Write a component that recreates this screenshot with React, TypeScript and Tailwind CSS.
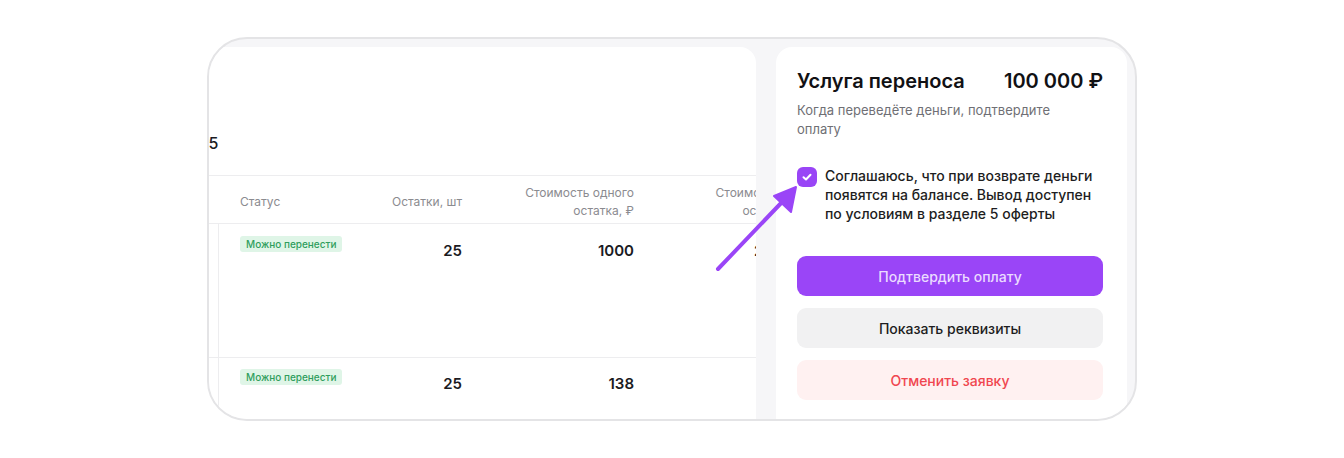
import React from "react";

function Badge() {
  return (
    <div className="w-fit rounded-[3px] bg-[#dff5e7] px-[6px] py-[2px] text-[10px] font-medium leading-[12px] text-[#2f9e5d]">
      Можно перенести
    </div>
  );
}

function Row({ qty, price, total, first }: { qty: string; price: string; total: string; first: boolean }) {
  const num = `shrink-0 text-right text-[15px] font-semibold leading-[22px] text-[#1b1b1f] ${first ? "pt-[16px]" : "pt-[15px]"}`;
  return (
    <div className="flex h-[134px] shrink-0 border-b border-[#ededef]">
      <div className="w-[10px] shrink-0 border-r border-[#ededef]" />
      <div className={`w-[150px] shrink-0 pl-[21px] ${first ? "pt-[12px]" : "pt-[11px]"}`}>
        <Badge />
      </div>
      <div className={`w-[93px] ${num}`}>{qty}</div>
      <div className={`w-[172px] ${num}`}>{price}</div>
      <div className={`w-[187px] whitespace-nowrap ${num}`}>{total}</div>
    </div>
  );
}

export default function App() {
  return (
    <div className="relative h-[458px] w-[1344px] bg-white" style={{ fontFamily: "Inter, 'Noto Sans', sans-serif" }}>
      <div className="flex justify-center pt-[37px]">
        <div className="flex h-[384px] w-[930px] gap-[20px] overflow-hidden rounded-[40px] border-2 border-[#e4e4e6] bg-[#f6f6f8] pr-[8px] pt-[8px]">
          {/* Left card */}
          <div className="flex w-[547px] shrink-0 flex-col overflow-hidden rounded-tr-[16px] bg-white">
            <div className="h-[129px] shrink-0 border-b border-[#ededef] pt-[84px]">
              <div className="ml-[-11px] text-[16px] font-medium leading-[24px] text-[#1b1b1f]">45</div>
            </div>
            <div className="flex h-[48px] shrink-0 items-center border-b border-[#ededef] pt-[4px] text-[12px] leading-[18px] text-[#8b8b90]">
              <div className="w-[10px] shrink-0" />
              <div className="w-[150px] shrink-0 pl-[21px]">Статус</div>
              <div className="w-[93px] shrink-0 text-right">Остатки, шт</div>
              <div className="w-[172px] shrink-0 text-right">
                Стоимость одного
                <br />
                остатка, ₽
              </div>
              <div className="w-[176px] shrink-0 whitespace-nowrap text-right">
                Стоимость всех
                <br />
                остатков, ₽
              </div>
            </div>
            <Row qty="25" price="1000" total="25 000 ₽" first={true} />
            <Row qty="25" price="138" total="3 450" first={false} />
          </div>

          {/* Right card */}
          <div className="flex w-[351px] shrink-0 flex-col rounded-t-[16px] bg-white pl-[21px] pr-[24px] pt-[21px]">
            <div className="flex items-center justify-between text-[20px] font-semibold leading-[26px] text-[#111114]">
              <span>Услуга переноса</span>
              <span>100 000 ₽</span>
            </div>
            <p className="mt-[7px] text-[13px] leading-[19px] text-[#6f6f75]">
              Когда переведёте деньги, подтвердите
              <br />
              оплату
            </p>
            <div className="mt-[27px] flex gap-[8px]">
              <div className="mt-[1px] flex h-[20px] w-[20px] shrink-0 items-center justify-center rounded-[6px] bg-[#9945f6]">
                <svg width="12" height="12" viewBox="0 0 12 12" fill="none">
                  <path d="M2.5 6.2 L5 8.5 L9.5 3.8" stroke="white" strokeWidth="2" strokeLinecap="round" strokeLinejoin="round" />
                </svg>
              </div>
              <p className="text-[14px] font-medium leading-[19px] text-[#1d1d21]">
                Соглашаюсь, что при возврате деньги появятся на балансе. Вывод доступен по условиям в разделе 5 оферты
              </p>
            </div>
            <div className="mt-[33px] flex flex-col gap-[12px]">
              <button className="h-[40px] w-full shrink-0 rounded-[9px] bg-[#9a45f7] text-[14px] font-medium text-[#eadbff]">
                Подтвердить оплату
              </button>
              <button className="h-[40px] w-full shrink-0 rounded-[9px] bg-[#f1f1f2] text-[14px] font-medium text-[#1d1d21]">
                Показать реквизиты
              </button>
              <button className="h-[40px] w-full shrink-0 rounded-[9px] bg-[#fff1f1] text-[14px] font-medium text-[#f0464f]">
                Отменить заявку
              </button>
            </div>
          </div>
        </div>
      </div>

      {/* Arrow annotation */}
      <svg className="pointer-events-none absolute left-0 top-0" width="1344" height="458">
        <line x1="718" y1="269" x2="784" y2="200" stroke="#9a45f7" strokeWidth="4" strokeLinecap="round" />
        <polygon points="796,187 774,196 791,212" fill="#9a45f7" stroke="#9a45f7" strokeWidth="2" strokeLinejoin="round" />
      </svg>
    </div>
  );
}
